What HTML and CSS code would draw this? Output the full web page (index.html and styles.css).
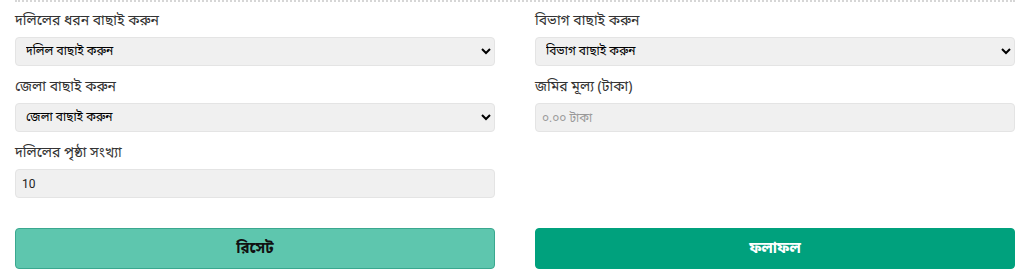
FILE: index.html
```html
<!DOCTYPE html>
<html lang="bn">

<head>
    <meta charset="UTF-8">
    <meta name="viewport" content="width=device-width, initial-scale=1.0">
    <title>দলিল খরচ হিসাব</title>
    <link rel="stylesheet" href="styles.css">
</head>

<body>
    <div class="calculator">
        <div class="form-grid">
            <div class="column">
                <div class="field">
                    <label for="deedType">দলিলের ধরন বাছাই করুন</label>
                    <select id="deedType" class="form-control">
                        <option>দলিল বাছাই করুন</option>
                    </select>
                </div>
                <div class="field">
                    <label for="district">জেলা বাছাই করুন</label>
                    <select id="district" class="form-control">
                        <option>জেলা বাছাই করুন</option>
                    </select>
                </div>
                <div class="field">
                    <label for="pages">দলিলের পৃষ্ঠা সংখ্যা</label>
                    <input id="pages" class="form-control" type="text" value="10">
                </div>
            </div>
            <div class="column">
                <div class="field">
                    <label for="division">বিভাগ বাছাই করুন</label>
                    <select id="division" class="form-control">
                        <option>বিভাগ বাছাই করুন</option>
                    </select>
                </div>
                <div class="field">
                    <label for="price">জমির মূল্য (টাকা)</label>
                    <input id="price" class="form-control" type="text" placeholder="০.০০ টাকা">
                </div>
            </div>
        </div>

        <div class="actions">
            <button class="btn btn-reset">রিসেট</button>
            <button class="btn btn-result">ফলাফল</button>
        </div>
    </div>
</body>

</html>
```

FILE: styles.css
```css
body {
    margin: 0;
    padding: 0 9px 0 15px;
    font-family: "Noto Sans Bengali", "Noto Sans", "Liberation Sans", sans-serif;
    color: #333;
    background-color: #fff;
}

.calculator {
    width: 1000px;
    border-top: 2px dotted #d6d6d6;
    padding-top: 11px;
}

.form-grid {
    display: grid;
    grid-template-columns: 480px 480px;
    column-gap: 40px;
}

.field {
    margin-bottom: 13px;
}

.field label {
    display: block;
    font-size: 14px;
    line-height: 18px;
    margin-bottom: 6px;
    color: #333;
}

.form-control {
    display: block;
    width: 100%;
    box-sizing: border-box;
    height: 29px;
    padding: 0 6px;
    font-family: inherit;
    font-size: 12px;
    font-weight: normal;
    color: #000;
    background-color: #f0f0f0;
    border: 1px solid #e4e4e4;
    border-radius: 4px;
}

input.form-control {
    font-family: "Roboto", "Noto Sans Bengali", sans-serif;
    color: #222;
}

input.form-control::placeholder {
    color: #999;
}

.actions {
    display: grid;
    grid-template-columns: 480px 480px;
    column-gap: 40px;
    margin-top: 17px;
}

.btn {
    height: 41px;
    border-radius: 4px;
    font-family: inherit;
    font-size: 15px;
    font-weight: bold;
    cursor: pointer;
}

.btn-reset {
    background-color: #5ec6ae;
    border: 1px solid #3aa88f;
    color: #111;
}

.btn-result {
    background-color: #00a17d;
    border: 1px solid #00a17d;
    color: #fff;
}
```
